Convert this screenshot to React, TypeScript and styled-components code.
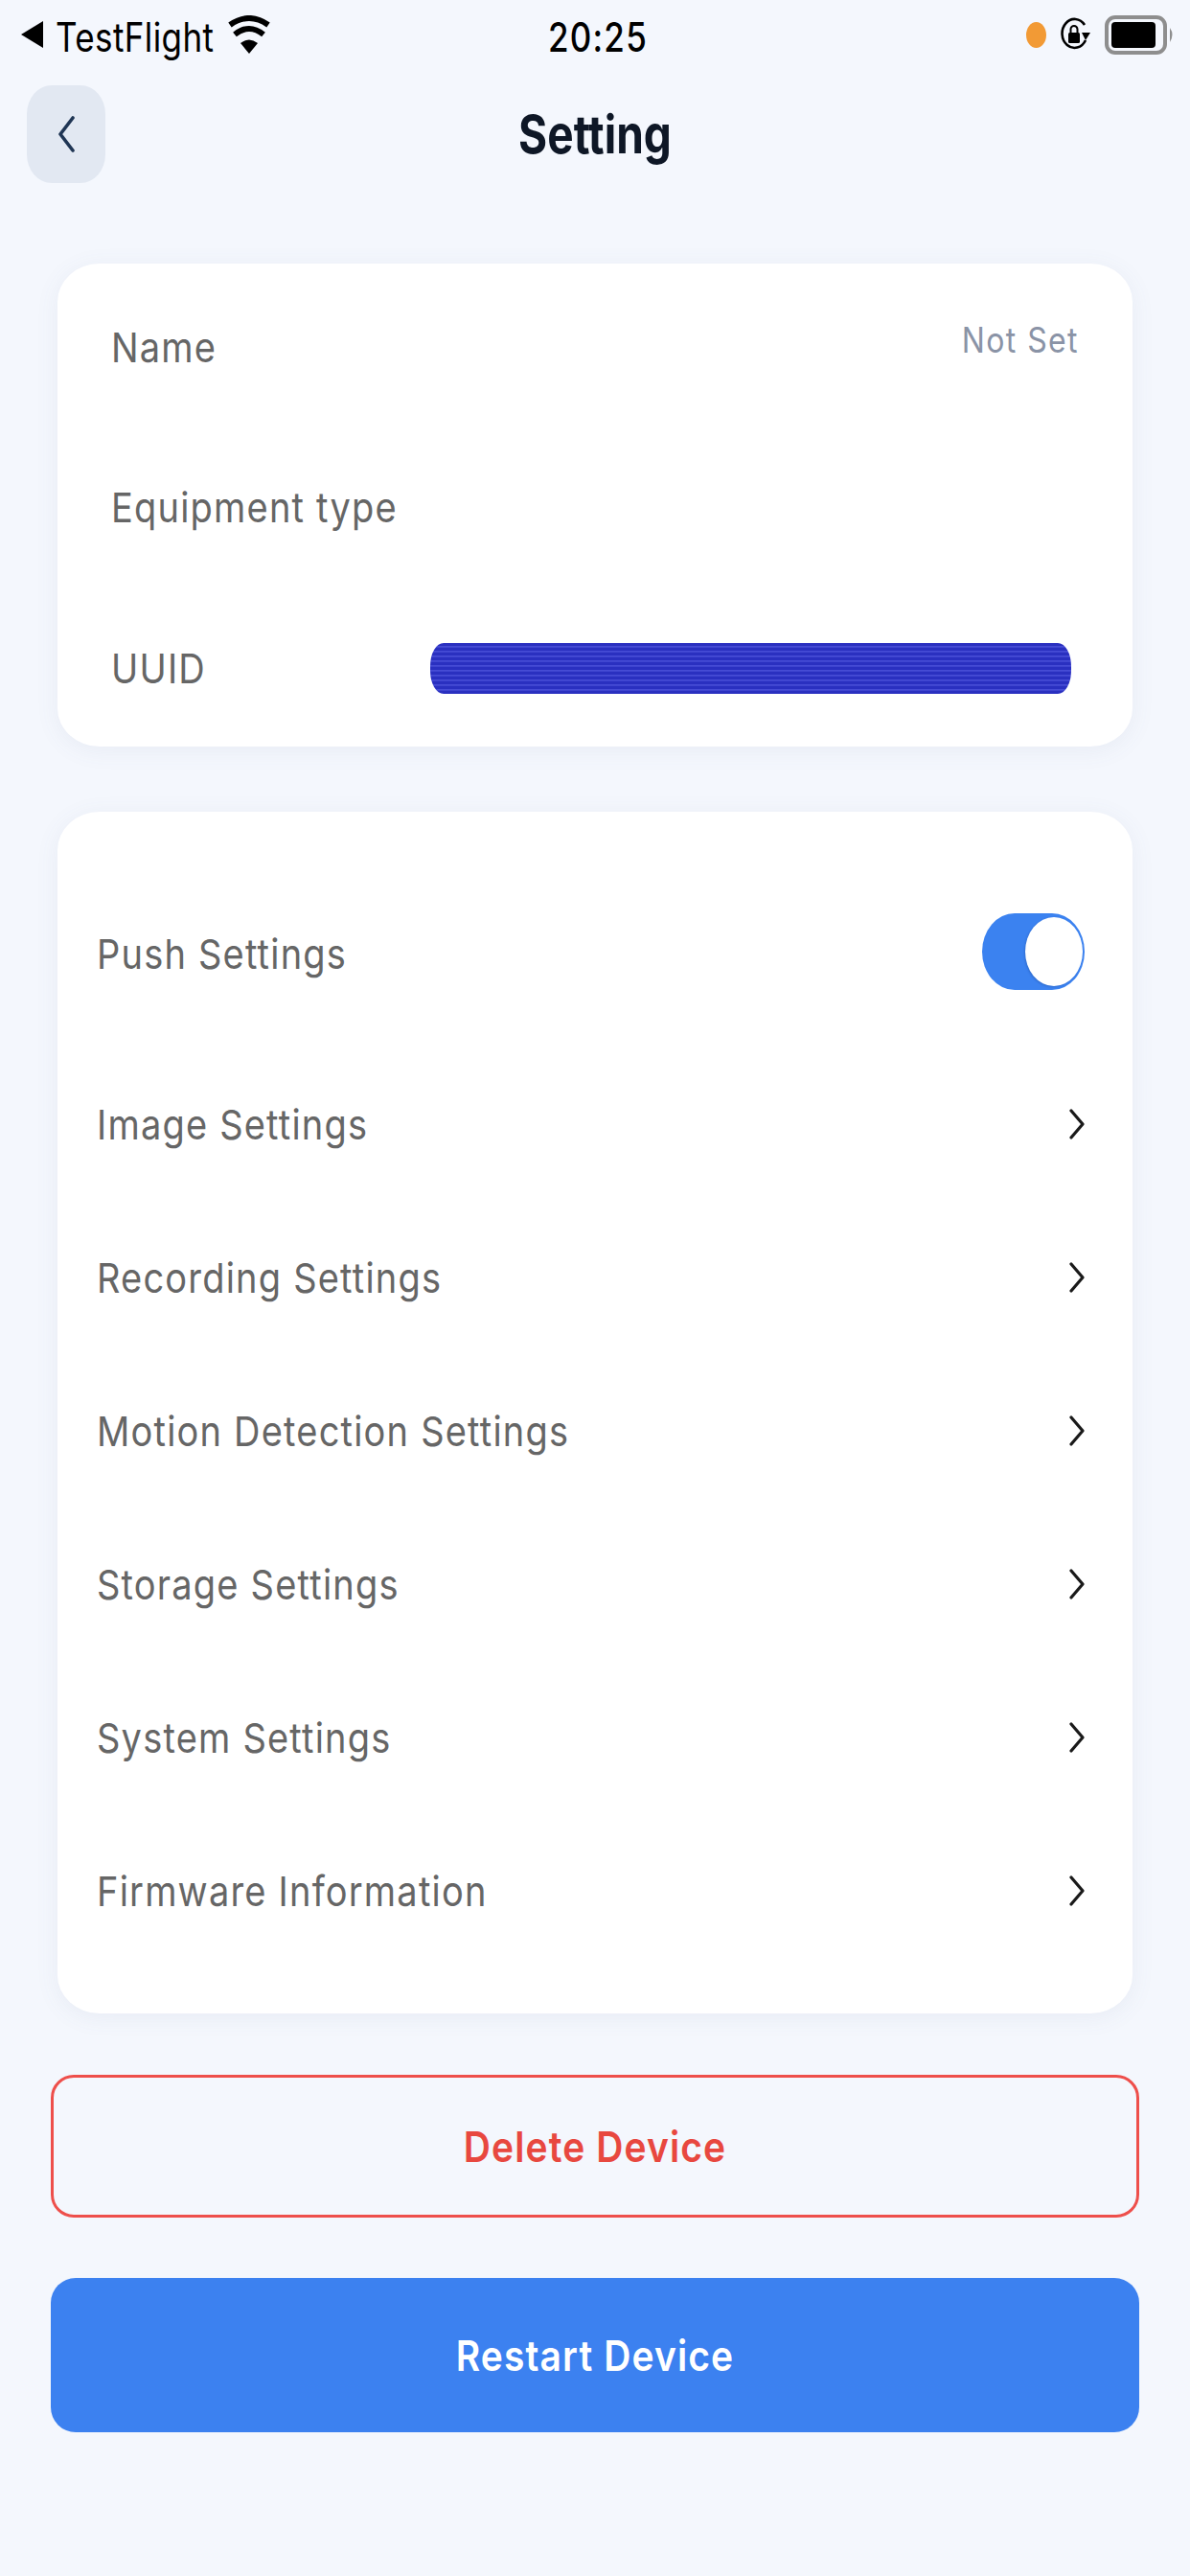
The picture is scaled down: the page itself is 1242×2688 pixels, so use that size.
import styled, { createGlobalStyle } from 'styled-components';

const GlobalStyle = createGlobalStyle`
	html, body {
		margin: 0;
		padding: 0;
		background: #f4f7fd;
	}
	* {
		box-sizing: border-box;
	}
`;

const Page = styled.div`
	display: flex;
	flex-direction: column;
	width: 1242px;
	height: 2688px;
	overflow: hidden;
	background: #f4f7fd;
	font-family: Inter, Roboto, 'Liberation Sans', sans-serif;
`;

const StatusBar = styled.div`
	display: grid;
	grid-template-columns: 1fr auto 1fr;
	align-items: center;
	height: 76px;
	margin-bottom: 13px;
	padding: 0 16px 4px 22px;
	color: #000;
`;

const StatusLeft = styled.div`
	display: flex;
	align-items: center;
	gap: 15px;
`;

const StatusRight = styled.div`
	display: flex;
	align-items: center;
	justify-content: flex-end;
	gap: 15px;
`;

const Stretched = styled.span`
	display: inline-block;
	transform: scaleY(1.2);
`;

const Carrier = styled(Stretched)`
	font-size: 35px;
	line-height: 40px;
	letter-spacing: 0.4px;
	margin-left: -2px;
	position: relative;
	top: 2px;
`;

const Clock = styled(Stretched)`
	font-size: 35px;
	line-height: 40px;
	font-weight: 500;
	letter-spacing: 1.2px;
	position: relative;
	top: 2px;
`;

const RecordingDot = styled.span`
	width: 21px;
	height: 27px;
	border-radius: 50%;
	background: #f29a35;
`;

const Header = styled.header`
	display: grid;
	grid-template-columns: 82px 1fr 82px;
	align-items: center;
	height: 102px;
	margin-bottom: 84px;
	padding: 0 28px;
`;

const BackButton = styled.div`
	display: flex;
	align-items: center;
	justify-content: center;
	height: 102px;
	border-radius: 26px / 30px;
	background: #e2e8f2;
`;

const TitleRow = styled.div`
	text-align: center;
`;

const Title = styled(Stretched)`
	font-size: 46px;
	line-height: 52px;
	font-weight: 700;
	color: #0e1726;
`;

const Content = styled.main`
	display: flex;
	flex-direction: column;
	padding: 0 60px;
`;

const Card = styled.section`
	background: #fff;
	border-radius: 44px / 40px;
	box-shadow: 0 4px 24px rgba(90, 105, 140, 0.08);
`;

const InfoCard = styled(Card)`
	height: 504px;
	margin-bottom: 68px;
	padding: 3px 56px 0 56px;
`;

const InfoRow = styled.div`
	display: flex;
	align-items: center;
	justify-content: space-between;
	height: 167.5px;
`;

const RowLabel = styled(Stretched)`
	font-size: 38px;
	line-height: 44px;
	letter-spacing: 1.2px;
	color: #666;
	transform: scaleY(1.13);
`;

const NotSet = styled(Stretched)`
	margin-bottom: 14px;
	font-size: 32px;
	line-height: 40px;
	letter-spacing: 1.4px;
	color: #8a93a6;
	transform: scaleY(1.15);
`;

// scribbled-over value in the UUID row
const UuidMask = styled.div`
	width: 669px;
	height: 53px;
	margin: 2px 8px 0 0;
	border-radius: 14px / 24px;
	background: repeating-linear-gradient(
		180deg,
		#2a30c0 0,
		#2a30c0 3px,
		#4a50d8 3px,
		#3a40cc 5px
	);
`;

const SettingsCard = styled(Card)`
	height: 1254px;
	margin-bottom: 64px;
	padding: 68px 50px 0 41px;
`;

const ToggleRow = styled.div`
	display: flex;
	align-items: center;
	justify-content: space-between;
	height: 160px;
	margin-bottom: 18px;
`;

const LinkRow = styled.div`
	display: flex;
	align-items: center;
	justify-content: space-between;
	height: 160px;
`;

const Toggle = styled.div`
	display: flex;
	align-items: center;
	justify-content: flex-end;
	width: 107px;
	height: 80px;
	margin-bottom: 4px;
	padding-right: 2px;
	border-radius: 34px / 40px;
	background: #3b82f0;
`;

const ToggleKnob = styled.span`
	width: 60px;
	height: 72px;
	border-radius: 50%;
	background: #fff;
	box-shadow: -1px 1px 2px rgba(20, 50, 120, 0.25);
`;

const DeleteButton = styled.div`
	display: flex;
	align-items: center;
	justify-content: center;
	height: 149px;
	margin: 0 -7px 63px;
	border: 3px solid #ee4f4b;
	border-radius: 24px;
	color: #e8483f;
`;

const RestartButton = styled.div`
	display: flex;
	align-items: center;
	justify-content: center;
	height: 161px;
	margin: 0 -7px;
	border-radius: 26px;
	background: #3c81f0;
	color: #fff;
`;

const ButtonLabel = styled(Stretched)`
	font-size: 39px;
	line-height: 46px;
	font-weight: 600;
	letter-spacing: 1.1px;
	transform: scaleY(1.14);
`;

const BackTriangle = () => (
	<svg width="23" height="28" viewBox="0 0 23 28">
		<path d="M0 14 L23 0 V28 Z" fill="#000" />
	</svg>
);

const WifiIcon = () => (
	<svg width="44" height="40" viewBox="0 0 44 40">
		<path d="M22 40 L13 29 Q22 22 31 29 Z" fill="#000" />
		<path d="M7 20 Q22 8 37 20" fill="none" stroke="#000" strokeWidth="6" />
		<path d="M2 10 Q22 -4 42 10" fill="none" stroke="#000" strokeWidth="6" />
	</svg>
);

const RotationLockIcon = () => (
	<svg width="31" height="36" viewBox="0 0 31 36">
		<path d="M26 24 A13 15 0 1 1 25 8" fill="none" stroke="#000" strokeWidth="2.6" />
		<path d="M22 16 H31 L26 24 Z" fill="#000" />
		<rect x="8" y="16" width="12" height="11" rx="1.5" fill="#000" />
		<path d="M10.5 16 V12.5 A3.5 3.5 0 0 1 17.5 12.5 V16" fill="none" stroke="#000" strokeWidth="2" />
	</svg>
);

const BatteryIcon = () => (
	<svg width="73" height="41" viewBox="0 0 73 41">
		<rect x="2" y="2" width="61" height="37" rx="9" fill="none" stroke="#8e8e8e" strokeWidth="4" />
		<rect x="7" y="7" width="46" height="27" rx="4" fill="#000" />
		<path d="M68 13 Q73 20 68 28 Z" fill="#8e8e8e" />
	</svg>
);

const BackChevron = () => (
	<svg width="18" height="38" viewBox="0 0 18 38">
		<path d="M16 2 L3 19 L16 36" fill="none" stroke="#1f3554" strokeWidth="3.6" strokeLinecap="round" strokeLinejoin="round" />
	</svg>
);

const RowChevron = () => (
	<svg width="16" height="32" viewBox="0 0 16 32">
		<path d="M2 2 L14 16 L2 30" fill="none" stroke="#1a1a1a" strokeWidth="3.2" strokeLinecap="round" strokeLinejoin="round" />
	</svg>
);

const links = [
	'Image Settings',
	'Recording Settings',
	'Motion Detection Settings',
	'Storage Settings',
	'System Settings',
	'Firmware Information'
];

export default function App() {
	return (
		<Page>
			<GlobalStyle />
			<StatusBar>
				<StatusLeft>
					<BackTriangle />
					<Carrier>TestFlight</Carrier>
					<WifiIcon />
				</StatusLeft>
				<Clock>20:25</Clock>
				<StatusRight>
					<RecordingDot />
					<RotationLockIcon />
					<BatteryIcon />
				</StatusRight>
			</StatusBar>
			<Header>
				<BackButton>
					<BackChevron />
				</BackButton>
				<TitleRow>
					<Title>Setting</Title>
				</TitleRow>
			</Header>
			<Content>
				<InfoCard>
					<InfoRow>
						<RowLabel>Name</RowLabel>
						<NotSet>Not Set</NotSet>
					</InfoRow>
					<InfoRow>
						<RowLabel>Equipment type</RowLabel>
					</InfoRow>
					<InfoRow>
						<RowLabel>UUID</RowLabel>
						<UuidMask />
					</InfoRow>
				</InfoCard>
				<SettingsCard>
					<ToggleRow>
						<RowLabel>Push Settings</RowLabel>
						<Toggle>
							<ToggleKnob />
						</Toggle>
					</ToggleRow>
					{links.map(label => (
						<LinkRow key={label}>
							<RowLabel>{label}</RowLabel>
							<RowChevron />
						</LinkRow>
					))}
				</SettingsCard>
				<DeleteButton>
					<ButtonLabel>Delete Device</ButtonLabel>
				</DeleteButton>
				<RestartButton>
					<ButtonLabel>Restart Device</ButtonLabel>
				</RestartButton>
			</Content>
		</Page>
	);
}
